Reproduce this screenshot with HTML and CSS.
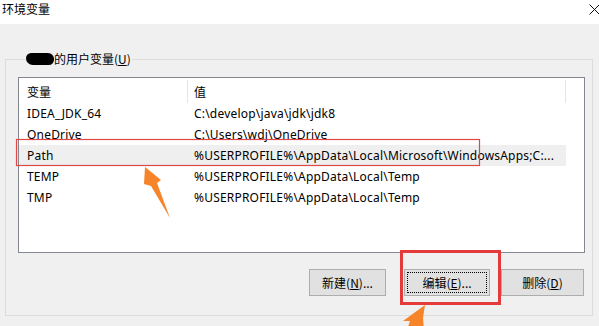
FILE: index.html
```html
<!DOCTYPE html>
<html lang="zh-CN">
<head>
<meta charset="utf-8">
<title>环境变量</title>
<link rel="stylesheet" href="styles.css">
</head>
<body>
<div class="window">
  <div class="titlebar">
    <span class="title">环境变量</span>
    <svg class="close" width="11" height="11" viewBox="0 0 11 11"><path d="M0.5 0.5 L10.5 10.5 M10.5 0.5 L0.5 10.5" stroke="#111" stroke-width="1" fill="none"/></svg>
  </div>
  <div class="content">
    <fieldset class="group">
      <legend class="group-label"><span class="blob"></span>的用户变量(<u>U</u>)</legend>
      <div class="list">
        <div class="row head">
          <div class="c1">变量</div>
          <div class="c2">值</div>
        </div>
        <div class="row"><div class="c1">IDEA_JDK_64</div><div class="c2">C:\develop\java\jdk\jdk8</div></div>
        <div class="row"><div class="c1">OneDrive</div><div class="c2">C:\Users\wdj\OneDrive</div></div>
        <div class="row sel"><div class="c1">Path</div><div class="c2">%USERPROFILE%\AppData\Local\Microsoft\WindowsApps;C:...</div></div>
        <div class="row"><div class="c1">TEMP</div><div class="c2">%USERPROFILE%\AppData\Local\Temp</div></div>
        <div class="row"><div class="c1">TMP</div><div class="c2">%USERPROFILE%\AppData\Local\Temp</div></div>
      </div>
      <div class="buttons">
        <button class="btn btn-new">新建(<u>N</u>)...</button>
        <button class="btn btn-edit"><span class="focus">编辑(<u>E</u>)...</span></button>
        <button class="btn btn-del">删除(<u>D</u>)</button>
      </div>
    </fieldset>
  </div>
  <svg class="annot" width="599" height="326" viewBox="0 0 599 326">
    <rect x="16.5" y="139.5" width="463" height="26" fill="none" stroke="#e04848" stroke-width="1.2"/>
    <rect x="401.5" y="251.5" width="98" height="52" fill="none" stroke="#e53a3a" stroke-width="3"/>
    <polygon points="145,167 161,180 157,183 170,218 151,186 144,184" fill="#f5842b"/>
    <polygon points="425,305 403,321 410,321 407,330 424,330 423,318" fill="#f5842b"/>
  </svg>
</div>
</body>
</html>
```

FILE: styles.css
```css
* { box-sizing: border-box; }
html, body { margin: 0; padding: 0; }
body {
  width: 599px;
  height: 326px;
  overflow: hidden;
  background: #f0f0f0;
  font-family: "Noto Sans", "Noto Sans CJK SC", sans-serif;
  font-size: 12px;
  color: #000;
}
.window {
  position: relative;
  width: 599px;
  height: 326px;
}
.titlebar {
  height: 24px;
  background: #fff;
  display: flex;
  justify-content: space-between;
  align-items: flex-start;
}
.title {
  font-family: "Noto Sans CJK SC", sans-serif;
  font-size: 12px;
  line-height: 18px;
  margin-left: 2px;
}
.close {
  margin-top: 4px;
  margin-right: -1px;
}
.content {
  padding-left: 5px;
}
.group {
  margin: 28px 0 0 0;
  width: 588px;
  height: 264px;
  padding: 11px 7px 0 12px;
  border: 1px solid #dcdcdc;
  min-width: 0;
}
.group-label {
  margin-left: 7px;
  padding: 0 1px;
  line-height: 14px;
  font-family: "Noto Sans CJK SC", sans-serif;
  display: flex;
  align-items: center;
}
.blob {
  display: inline-block;
  width: 28px;
  height: 12px;
  background: #000;
  border-radius: 6px 7px 6px 8px;
}
.list {
  width: 567px;
  height: 176px;
  border: 1px solid #828790;
  background: #fff;
}
.row {
  display: flex;
  width: 547px;
  height: 21px;
  align-items: center;
  white-space: nowrap;
  letter-spacing: 0.2px;
}
.row.head {
  height: 25px;
  letter-spacing: 0;
  font-family: "Noto Sans CJK SC", sans-serif;
}
.c1 {
  width: 168px;
  padding-left: 8px;
  height: 100%;
  display: flex;
  align-items: center;
}
.c2 {
  flex: 1;
  padding-left: 7px;
  height: 100%;
  display: flex;
  align-items: center;
}
.head .c1, .head .c2 {
  height: 23px;
  margin-top: 2px;
  padding-bottom: 1px;
}
.head .c1 { border-right: 1px solid #e5e5e5; width: 169px; }
.head .c2 { border-right: 1px solid #e5e5e5; padding-left: 6px; }
.row.sel { background: #efefef; }
.buttons {
  display: flex;
  margin-top: 16px;
  padding-left: 291px;
}
.btn {
  height: 27px;
  background: #e1e1e1;
  border: 1px solid #adadad;
  font-family: "Noto Sans CJK SC", sans-serif;
  font-size: 12px;
  color: #000;
  padding: 0;
  display: flex;
  align-items: center;
  justify-content: center;
}
.btn-new { width: 77px; margin-right: 18px; }
.btn-edit { width: 86px; margin-right: 11px; padding: 2px; }
.btn-del { width: 83px; }
.focus {
  flex: 1;
  align-self: stretch;
  border: 1px dotted #000;
  display: flex;
  align-items: center;
  justify-content: center;
}
.annot {
  position: absolute;
  left: 0;
  top: 0;
  pointer-events: none;
}
```
